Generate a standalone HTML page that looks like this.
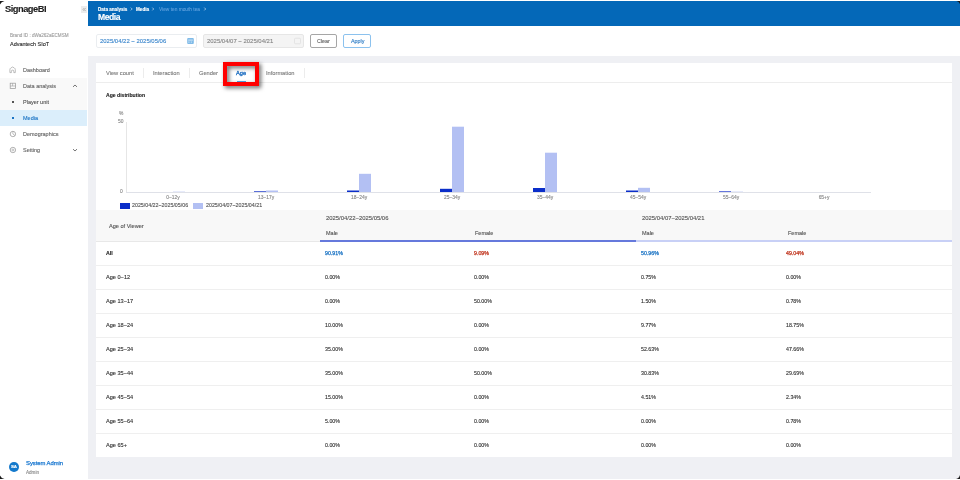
<!DOCTYPE html>
<html><head><meta charset="utf-8">
<style>
*{margin:0;padding:0;box-sizing:border-box}
html,body{width:960px;height:480px;overflow:hidden;background:#fff;font-family:"Liberation Sans",sans-serif}
.a{position:absolute}
.t{position:absolute;white-space:nowrap;line-height:12px;height:12px;will-change:transform;-webkit-text-stroke:0.12px currentColor}
</style></head><body>
<div class="a" style="left:0;top:0;width:88px;height:480px;background:#fff"></div>
<div class="a" style="left:88px;top:1px;width:872px;height:478px;background:#eff0f4"></div>
<div class="a" style="left:88px;top:1px;width:872px;height:25px;background:#0468b8"></div>
<div class="a" style="left:88px;top:26px;width:872px;height:30px;background:#fff"></div>
<div class="a" style="left:96px;top:63px;width:856px;height:394px;background:#fff"></div>
<div class="t" style="left:4.9px;top:2.90px;font-size:9.3px;color:#1e1e1e;font-weight:bold;letter-spacing:-0.5px;">SignageBI</div>
<div class="a" style="left:81px;top:6px;width:6px;height:7px;background:#ececec"></div>
<svg class="a" style="left:81px;top:6px" width="6" height="7"><path d="M3.2 2 L2 3.5 L3.2 5 M4.6 2 L3.4 3.5 L4.6 5" stroke="#999" stroke-width="0.6" fill="none"/></svg>
<div class="t" style="left:10px;top:30.00px;font-size:4.6px;color:#a0a0a0;">Brand ID : dWa262aECMSM</div>
<div class="t" style="left:10px;top:37.60px;font-size:5.5px;color:#2a2a2a;">Advantech SIoT</div>
<div class="a" style="left:0;top:78px;width:87px;height:32px;background:#f9f9f9"></div>
<div class="a" style="left:0;top:110px;width:87px;height:16px;background:#dbeefb"></div>
<div class="t" style="left:22.5px;top:64.00px;font-size:5.5px;color:#666;">Dashboard</div>
<div class="t" style="left:22.5px;top:80.00px;font-size:5.5px;color:#666;">Data analysis</div>
<div class="t" style="left:22.5px;top:96.00px;font-size:5.5px;color:#555;">Player unit</div>
<div class="t" style="left:22.5px;top:112.00px;font-size:5.5px;color:#1a73c4;">Media</div>
<div class="t" style="left:22.5px;top:128.00px;font-size:5.5px;color:#666;">Demographics</div>
<div class="t" style="left:22.5px;top:144.00px;font-size:5.5px;color:#666;">Setting</div>
<svg class="a" style="left:0;top:0" width="88" height="160">
<path d="M9.9 72.6 V69.6 Q9.9 68.6 10.8 68 L12.6 67 L14.4 68 Q15.3 68.6 15.3 69.6 V72.6 H13.8 V71.2 Q13.8 70.1 12.6 70.1 Q11.4 70.1 11.4 71.2 V72.6 Z" stroke="#a0a0a0" stroke-width="0.7" fill="none" stroke-linejoin="round"/>
<rect x="10.2" y="83.2" width="5.4" height="5.4" stroke="#9a9a9a" stroke-width="0.75" fill="none"/>
<path d="M10.2 86 H15.6 M12.6 83.2 V86" stroke="#9a9a9a" stroke-width="0.6"/>
<rect x="12" y="101" width="2" height="2" fill="#555"/>
<rect x="12" y="117" width="2" height="2" fill="#1a73c4"/>
<circle cx="12.9" cy="134" r="2.7" stroke="#9a9a9a" stroke-width="0.75" fill="none"/>
<path d="M12.9 131.3 V134 L15 135.6" stroke="#9a9a9a" stroke-width="0.6" fill="none"/>
<circle cx="12.9" cy="150" r="2.7" stroke="#9a9a9a" stroke-width="0.75" fill="none"/>
<circle cx="12.9" cy="150" r="1" stroke="#9a9a9a" stroke-width="0.6" fill="none"/>
<path d="M73 86.9 L75 85 L77 86.9" stroke="#666" stroke-width="0.9" fill="none"/>
<path d="M73 149.1 L75 151 L77 149.1" stroke="#666" stroke-width="0.9" fill="none"/>
</svg>
<div class="a" style="left:9.3px;top:462.2px;width:9.8px;height:9.8px;border-radius:50%;background:#1479cc"></div>
<div class="t" style="left:9.3px;top:461.1px;width:9.8px;text-align:center;font-size:4.4px;font-weight:bold;color:#fff;letter-spacing:-0.2px">SA</div>
<div class="t" style="left:25.8px;top:457.00px;font-size:5.9px;color:#1a78d0;letter-spacing:-0.05px;-webkit-text-stroke:0.25px #1a78d0;">System Admin</div>
<div class="t" style="left:25.8px;top:466.50px;font-size:4.6px;color:#888;">Admin</div>
<div class="t" style="left:98px;top:3.50px;font-size:4.6px;color:#fff;font-weight:bold;">Data analysis</div>
<div class="t" style="left:136px;top:3.50px;font-size:4.6px;color:#fff;font-weight:bold;">Media</div>
<svg class="a" style="left:0;top:0" width="220" height="20"><path d="M130.8 7.6 L132.2 9 L130.8 10.4 M152.3 7.6 L153.7 9 L152.3 10.4 M204.3 7.6 L205.7 9 L204.3 10.4" stroke="#d6e4f2" stroke-width="0.7" fill="none"/></svg>
<div class="t" style="left:159px;top:3.50px;font-size:4.8px;color:#5d9fdc;">View ten mouth tea</div>
<div class="t" style="left:98px;top:11.00px;font-size:8.6px;color:#fff;font-weight:bold;letter-spacing:-0.45px;">Media</div>
<div class="a" style="left:96px;top:34px;width:101px;height:14px;border:1px solid #eaedf0;border-radius:2px;background:#fff"></div>
<div class="t" style="left:100.25px;top:35.25px;font-size:5.95px;color:#3a86cc;">2025/04/22 ~ 2025/05/06</div>
<svg class="a" style="left:186px;top:37px" width="9" height="8"><rect x="1.2" y="1" width="6.6" height="6" rx="1" fill="#80bbe8"/><rect x="2.2" y="2.6" width="4.6" height="1" fill="#cfe6f7"/><rect x="2.2" y="4.6" width="1.4" height="1" fill="#cfe6f7"/><rect x="4.8" y="4.6" width="1.2" height="1" fill="#cfe6f7"/></svg>
<div class="a" style="left:203px;top:34px;width:101px;height:14px;border:1px solid #e6e6e6;border-radius:2px;background:#f4f4f4"></div>
<div class="t" style="left:206.9px;top:35.25px;font-size:5.95px;color:#858585;">2025/04/07 ~ 2025/04/21</div>
<svg class="a" style="left:293px;top:37px" width="9" height="8"><rect x="1.5" y="1.2" width="6" height="5.6" rx="1" fill="none" stroke="#ddd" stroke-width="0.7"/></svg>
<div class="a" style="left:310.4px;top:34.4px;width:26.3px;height:13.2px;border:0.8px solid #a6a6a6;border-radius:2px;background:#fff"></div>
<div class="t" style="left:316.8px;top:35.25px;font-size:5.4px;color:#666;">Clear</div>
<div class="a" style="left:343.3px;top:34.4px;width:27.7px;height:13.2px;border:0.8px solid #8cc2ee;border-radius:2px;background:#fff"></div>
<div class="t" style="left:350.5px;top:35.25px;font-size:5.4px;color:#2a7ac4;">Apply</div>
<div class="a" style="left:96px;top:82px;width:856px;height:1px;background:#ededed"></div>
<div class="t" style="left:105.9px;top:66.60px;font-size:5.7px;color:#7c7c7c;">View count</div>
<div class="t" style="left:153px;top:66.60px;font-size:5.7px;color:#7c7c7c;">Interaction</div>
<div class="t" style="left:198.9px;top:66.60px;font-size:5.7px;color:#7c7c7c;">Gender</div>
<div class="t" style="left:236.3px;top:66.60px;font-size:5.7px;color:#1a6cc0;-webkit-text-stroke:0.3px #1a6cc0;">Age</div>
<div class="t" style="left:265.5px;top:66.60px;font-size:5.7px;color:#7c7c7c;">Information</div>
<div class="a" style="left:143px;top:68px;width:1px;height:9.5px;background:#ececec"></div>
<div class="a" style="left:189px;top:68px;width:1px;height:9.5px;background:#ececec"></div>
<div class="a" style="left:304px;top:68px;width:1px;height:9.5px;background:#ececec"></div>
<div class="a" style="left:236.5px;top:80.8px;width:9.7px;height:1.2px;background:#52a8ea"></div>
<div class="t" style="left:105.9px;top:88.60px;font-size:5.1px;color:#222;font-weight:bold;">Age distribution</div>
<div class="t" style="left:118.75px;top:107.50px;font-size:4.9px;color:#888;">%</div>
<div class="t" style="left:118.25px;top:115.80px;font-size:4.9px;color:#888;">50</div>
<div class="t" style="left:119.5px;top:186.30px;font-size:4.9px;color:#888;">0</div>
<div class="a" style="left:126px;top:122px;width:1px;height:70px;background:#e6e6e6"></div>
<div class="a" style="left:126px;top:192px;width:745px;height:1px;background:#dfe1e8"></div>
<svg class="a" style="left:0;top:0" width="960" height="200"><rect x="254" y="191" width="12" height="1" fill="#5a6fd8"/><rect x="347" y="190.5" width="12" height="1.5" fill="#0b2ec9"/><rect x="440" y="188.8" width="12" height="3.2" fill="#0b2ec9"/><rect x="533" y="188" width="12" height="4" fill="#0b2ec9"/><rect x="626" y="190.5" width="12" height="1.5" fill="#0b2ec9"/><rect x="719" y="191" width="12" height="1" fill="#6677dd"/><rect x="173" y="191.4" width="12" height="0.6" fill="#d8def9"/><rect x="266" y="190.5" width="12" height="1.5" fill="#b3c0f3"/><rect x="359" y="173.8" width="12" height="18.2" fill="#b3c0f3"/><rect x="452" y="126.7" width="12" height="65.3" fill="#b3c0f3"/><rect x="545" y="152.7" width="12" height="39.3" fill="#b3c0f3"/><rect x="638" y="187.8" width="12" height="4.2" fill="#b3c0f3"/><rect x="731" y="191.4" width="12" height="0.6" fill="#d8def9"/></svg>
<div class="t" style="left:143px;width:60px;text-align:center;top:191.6px;font-size:4.9px;color:#888">0~12y</div>
<div class="t" style="left:236px;width:60px;text-align:center;top:191.6px;font-size:4.9px;color:#888">13~17y</div>
<div class="t" style="left:329px;width:60px;text-align:center;top:191.6px;font-size:4.9px;color:#888">18~24y</div>
<div class="t" style="left:422px;width:60px;text-align:center;top:191.6px;font-size:4.9px;color:#888">25~34y</div>
<div class="t" style="left:515px;width:60px;text-align:center;top:191.6px;font-size:4.9px;color:#888">35~44y</div>
<div class="t" style="left:608px;width:60px;text-align:center;top:191.6px;font-size:4.9px;color:#888">45~54y</div>
<div class="t" style="left:701px;width:60px;text-align:center;top:191.6px;font-size:4.9px;color:#888">55~64y</div>
<div class="t" style="left:794px;width:60px;text-align:center;top:191.6px;font-size:4.9px;color:#888">65+y</div>
<div class="a" style="left:120px;top:202.75px;width:10px;height:5.75px;background:#0b2ec9"></div>
<div class="t" style="left:132.25px;top:199.20px;font-size:5.3px;color:#555;">2025/04/22~2025/05/06</div>
<div class="a" style="left:193.25px;top:202.75px;width:10px;height:5.75px;background:#b3c0f3"></div>
<div class="t" style="left:205.5px;top:199.20px;font-size:5.3px;color:#555;">2025/04/07~2025/04/21</div>
<div class="a" style="left:96px;top:210.25px;width:856px;height:30.75px;background:#f8f8f8"></div>
<div class="a" style="left:96px;top:241px;width:224px;height:1px;background:#e8e8e8"></div>
<div class="a" style="left:320px;top:240.2px;width:315.6px;height:1.8px;background:#6579dc"></div>
<div class="a" style="left:635.6px;top:240.2px;width:316.4px;height:1.8px;background:#c8d0f6"></div>
<div class="t" style="left:109.1px;top:219.80px;font-size:5.6px;color:#555;">Age of Viewer</div>
<div class="t" style="left:326px;top:211.50px;font-size:5.9px;color:#555;">2025/04/22~2025/05/06</div>
<div class="t" style="left:326px;top:226.75px;font-size:5.5px;color:#555;">Male</div>
<div class="t" style="left:475px;top:226.75px;font-size:5.5px;color:#555;">Female</div>
<div class="t" style="left:642px;top:211.50px;font-size:5.9px;color:#555;">2025/04/07~2025/04/21</div>
<div class="t" style="left:642px;top:226.75px;font-size:5.5px;color:#555;">Male</div>
<div class="t" style="left:787.7px;top:226.75px;font-size:5.5px;color:#555;">Female</div>
<div class="a" style="left:96px;top:265px;width:856px;height:1px;background:#efefef"></div>
<div class="a" style="left:96px;top:289px;width:856px;height:1px;background:#efefef"></div>
<div class="a" style="left:96px;top:313px;width:856px;height:1px;background:#efefef"></div>
<div class="a" style="left:96px;top:337px;width:856px;height:1px;background:#efefef"></div>
<div class="a" style="left:96px;top:361px;width:856px;height:1px;background:#efefef"></div>
<div class="a" style="left:96px;top:385px;width:856px;height:1px;background:#efefef"></div>
<div class="a" style="left:96px;top:409px;width:856px;height:1px;background:#efefef"></div>
<div class="a" style="left:96px;top:433px;width:856px;height:1px;background:#efefef"></div>
<div class="t" style="left:106px;top:247.00px;font-size:5.25px;color:#222;font-weight:bold;">All</div>
<div class="t" style="left:324.75px;top:247.00px;font-size:5.25px;color:#1a73c4;-webkit-text-stroke:0.25px #1a73c4;">90.91%</div>
<div class="t" style="left:473.75px;top:247.00px;font-size:5.25px;color:#c0341d;-webkit-text-stroke:0.25px #c0341d;">9.09%</div>
<div class="t" style="left:640.8px;top:247.00px;font-size:5.25px;color:#1a73c4;-webkit-text-stroke:0.25px #1a73c4;">50.96%</div>
<div class="t" style="left:786px;top:247.00px;font-size:5.25px;color:#c0341d;-webkit-text-stroke:0.25px #c0341d;">49.04%</div>
<div class="t" style="left:106px;top:271.40px;font-size:5.6px;color:#333;">Age 0~12</div>
<div class="t" style="left:324.75px;top:271.40px;font-size:5.25px;color:#333;">0.00%</div>
<div class="t" style="left:473.75px;top:271.40px;font-size:5.25px;color:#333;">0.00%</div>
<div class="t" style="left:640.8px;top:271.40px;font-size:5.25px;color:#333;">0.75%</div>
<div class="t" style="left:786px;top:271.40px;font-size:5.25px;color:#333;">0.00%</div>
<div class="t" style="left:106px;top:295.40px;font-size:5.6px;color:#333;">Age 13~17</div>
<div class="t" style="left:324.75px;top:295.40px;font-size:5.25px;color:#333;">0.00%</div>
<div class="t" style="left:473.75px;top:295.40px;font-size:5.25px;color:#333;">50.00%</div>
<div class="t" style="left:640.8px;top:295.40px;font-size:5.25px;color:#333;">1.50%</div>
<div class="t" style="left:786px;top:295.40px;font-size:5.25px;color:#333;">0.78%</div>
<div class="t" style="left:106px;top:319.40px;font-size:5.6px;color:#333;">Age 18~24</div>
<div class="t" style="left:324.75px;top:319.40px;font-size:5.25px;color:#333;">10.00%</div>
<div class="t" style="left:473.75px;top:319.40px;font-size:5.25px;color:#333;">0.00%</div>
<div class="t" style="left:640.8px;top:319.40px;font-size:5.25px;color:#333;">9.77%</div>
<div class="t" style="left:786px;top:319.40px;font-size:5.25px;color:#333;">18.75%</div>
<div class="t" style="left:106px;top:343.40px;font-size:5.6px;color:#333;">Age 25~34</div>
<div class="t" style="left:324.75px;top:343.40px;font-size:5.25px;color:#333;">35.00%</div>
<div class="t" style="left:473.75px;top:343.40px;font-size:5.25px;color:#333;">0.00%</div>
<div class="t" style="left:640.8px;top:343.40px;font-size:5.25px;color:#333;">52.63%</div>
<div class="t" style="left:786px;top:343.40px;font-size:5.25px;color:#333;">47.66%</div>
<div class="t" style="left:106px;top:367.40px;font-size:5.6px;color:#333;">Age 35~44</div>
<div class="t" style="left:324.75px;top:367.40px;font-size:5.25px;color:#333;">35.00%</div>
<div class="t" style="left:473.75px;top:367.40px;font-size:5.25px;color:#333;">50.00%</div>
<div class="t" style="left:640.8px;top:367.40px;font-size:5.25px;color:#333;">30.83%</div>
<div class="t" style="left:786px;top:367.40px;font-size:5.25px;color:#333;">29.69%</div>
<div class="t" style="left:106px;top:391.40px;font-size:5.6px;color:#333;">Age 45~54</div>
<div class="t" style="left:324.75px;top:391.40px;font-size:5.25px;color:#333;">15.00%</div>
<div class="t" style="left:473.75px;top:391.40px;font-size:5.25px;color:#333;">0.00%</div>
<div class="t" style="left:640.8px;top:391.40px;font-size:5.25px;color:#333;">4.51%</div>
<div class="t" style="left:786px;top:391.40px;font-size:5.25px;color:#333;">2.34%</div>
<div class="t" style="left:106px;top:415.40px;font-size:5.6px;color:#333;">Age 55~64</div>
<div class="t" style="left:324.75px;top:415.40px;font-size:5.25px;color:#333;">5.00%</div>
<div class="t" style="left:473.75px;top:415.40px;font-size:5.25px;color:#333;">0.00%</div>
<div class="t" style="left:640.8px;top:415.40px;font-size:5.25px;color:#333;">0.00%</div>
<div class="t" style="left:786px;top:415.40px;font-size:5.25px;color:#333;">0.78%</div>
<div class="t" style="left:106px;top:439.40px;font-size:5.6px;color:#333;">Age 65+</div>
<div class="t" style="left:324.75px;top:439.40px;font-size:5.25px;color:#333;">0.00%</div>
<div class="t" style="left:473.75px;top:439.40px;font-size:5.25px;color:#333;">0.00%</div>
<div class="t" style="left:640.8px;top:439.40px;font-size:5.25px;color:#333;">0.00%</div>
<div class="t" style="left:786px;top:439.40px;font-size:5.25px;color:#333;">0.00%</div>
<div class="a" style="left:223px;top:62px;width:36px;height:24px;border:4px solid #f00;filter:drop-shadow(2px 2.5px 2px rgba(0,0,0,0.6))"></div>
<svg class="a" style="left:0;top:0" width="960" height="480">
<path d="M0 1 H4.5 Q1.2 1.6 0 4.5 Z" fill="#1a1a1a"/>
<path d="M960 1 H956.5 Q959 1.6 960 4 Z" fill="#1a1a1a"/>
<path d="M0 479 H4.5 Q1.2 478.4 0 475.5 Z" fill="#1a1a1a"/>
<path d="M960 479 H956 Q959 478.4 960 475 Z" fill="#1a1a1a"/>
</svg>
</body></html>
